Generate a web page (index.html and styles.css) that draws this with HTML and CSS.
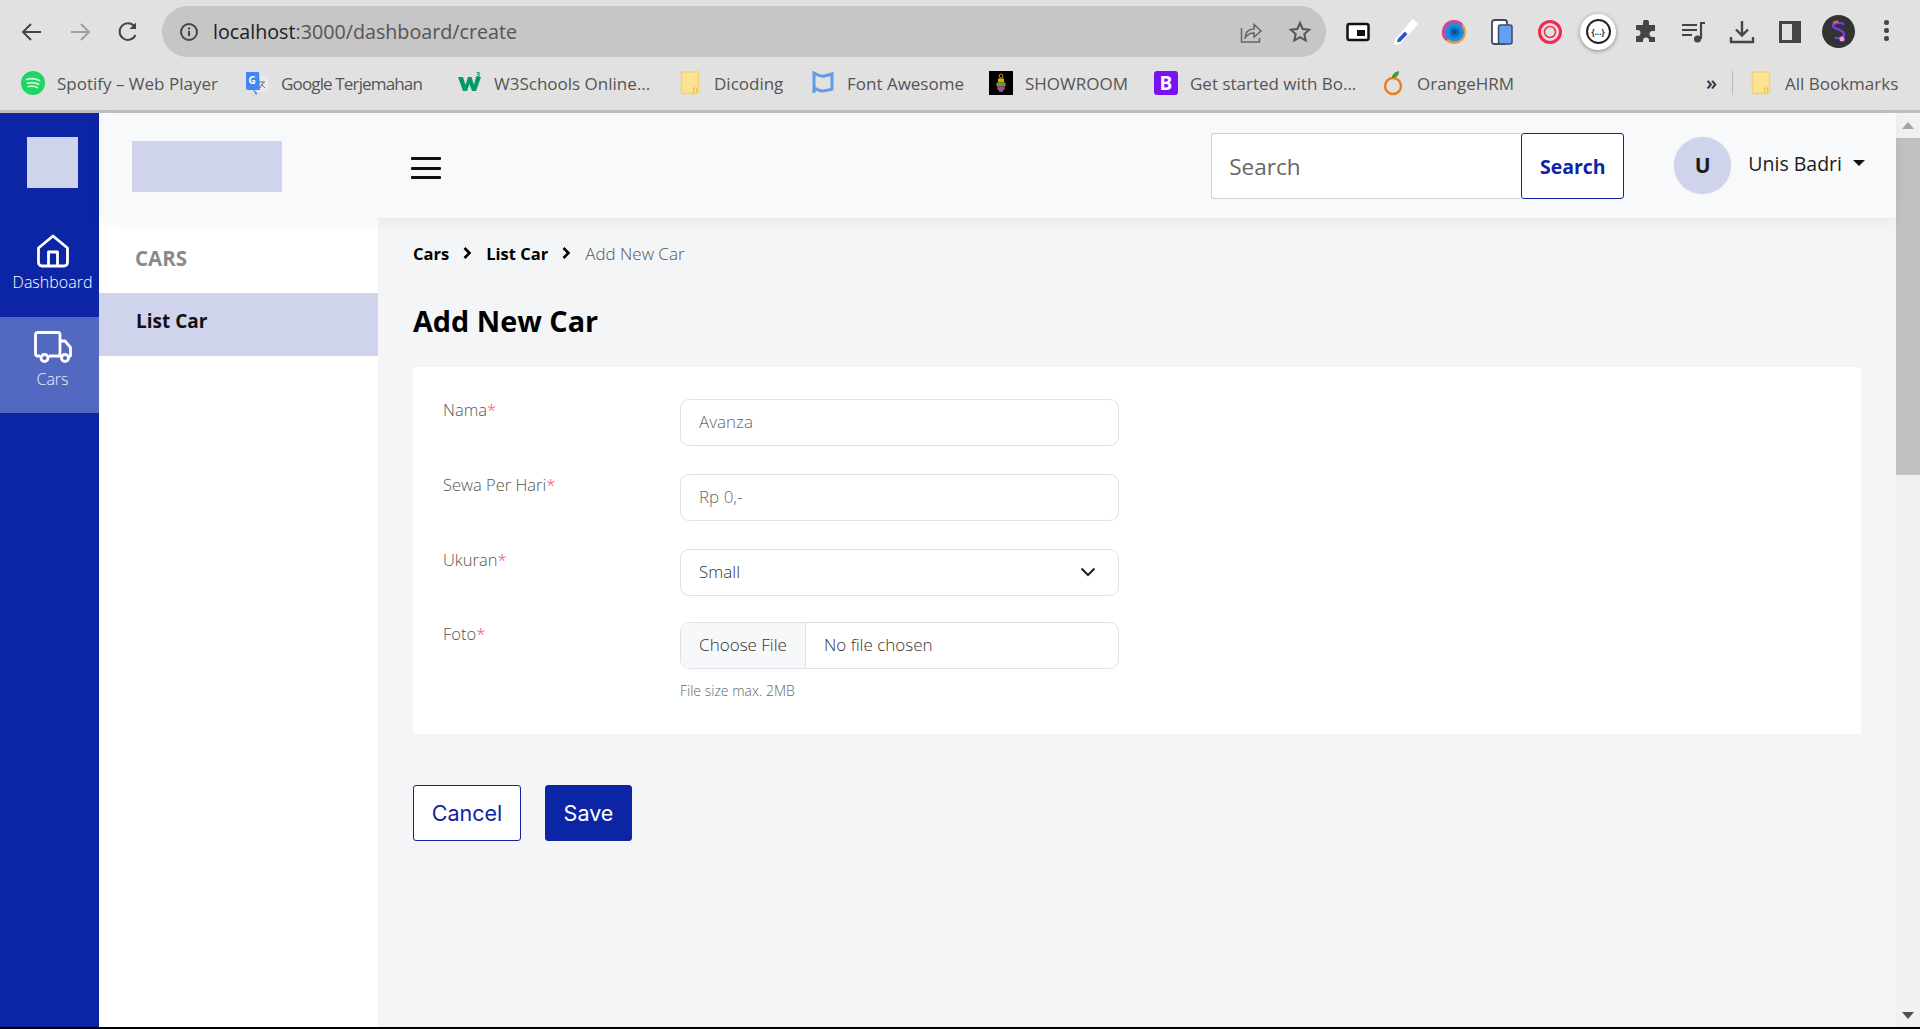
FILE: index.html
```html
<!DOCTYPE html>
<html lang="en">
<head>
<meta charset="utf-8">
<title>Add New Car</title>
<link rel="stylesheet" href="styles.css">
</head>
<body>
<div class="browser">
  <div class="toolbar">
    <div class="nav-buttons">
      <span class="tool"><svg width="24" height="24" viewBox="0 0 24 24" fill="none" stroke="#454545" stroke-width="2"><path d="M21 12H4M11 4l-8 8 8 8"/></svg></span>
      <span class="tool"><svg width="24" height="24" viewBox="0 0 24 24" fill="none" stroke="#a0a0a0" stroke-width="2"><path d="M3 12h17M13 4l8 8-8 8"/></svg></span>
      <span class="tool"><svg width="24" height="24" viewBox="0 0 24 24" fill="none" stroke="#454545" stroke-width="2"><path d="M19.5 15a8.3 8.3 0 1 1-1-8.5"/><path d="M20 2.5V9h-6.500z" fill="#454545" stroke="none"/></svg></span>
    </div>
    <div class="omnibox">
      <svg class="omni-info" width="20" height="20" viewBox="0 0 20 20" fill="none" stroke="#454545" stroke-width="2"><circle cx="10" cy="10" r="8"/><path d="M10 9v5M10 5.500v2"/></svg>
      <span class="url"><span class="url-host">localhost</span>:3000/dashboard/create</span>
      <svg class="omni-share" width="24" height="24" viewBox="0 0 24 24" fill="none" stroke="#666" stroke-width="1.500"><path d="M2.500 8v14h18v-4"/><path d="M6 19c0-7 4-10 9-10V4.500l7 6.500-7 6v-4c-4 0-7 1.500-9 5.500z"/></svg>
      <svg class="omni-star" width="24" height="24" viewBox="0 0 24 24" fill="none" stroke="#555" stroke-width="2"><path d="M12 3l2.700 6 6.500.7-4.900 4.300 1.400 6.500L12 17.200 6.300 20.500l1.400-6.500L2.800 9.700 9.300 9z"/></svg>
    </div>
    <div class="extensions">
      <span class="tool"><svg width="24" height="24" viewBox="0 0 24 24"><rect x="1.500" y="4" width="21" height="16" rx="2" fill="#fff" stroke="#111" stroke-width="2.500"/><rect x="11" y="10" width="8" height="6" fill="#111"/></svg></span>
      <span class="tool"><svg width="26" height="28" viewBox="0 0 26 28"><path d="M1 27l1-6L15 7l5 5L7 26z" fill="#fff"/><path d="M4 24.500l.8-3.500 7-7.500 2.700 2.700-7 7.300z" fill="#2f55c4"/><path d="M14 7l6-6 5 5-6 7z" fill="#fff"/></svg></span>
      <span class="tool"><svg width="26" height="26" viewBox="0 0 26 26"><circle cx="13" cy="13" r="12" fill="#f59a3c"/><path d="M13 1a12 12 0 0 0-8 21l17-17a12 12 0 0 0-9-4z" fill="#d8409e"/><circle cx="13.500" cy="13" r="9.500" fill="#1a8fe0"/><circle cx="13.500" cy="13" r="5.500" fill="#0f6fc0"/><circle cx="13.500" cy="13" r="2.500" fill="#0a4f90"/></svg></span>
      <span class="tool"><svg width="24" height="26" viewBox="0 0 24 26"><rect x="2" y="1" width="15" height="24" rx="2.500" fill="#fff" stroke="#3f4a5e" stroke-width="1.800"/><rect x="8.500" y="6" width="13.500" height="19" rx="2" fill="#669df6" stroke="#3f4a5e" stroke-width="1.500"/></svg></span>
      <span class="tool"><svg width="26" height="26" viewBox="0 0 26 26" fill="none" stroke="#f7264f"><circle cx="13" cy="13" r="10.500" stroke-width="3"/><circle cx="13" cy="13" r="5.500" stroke-width="1.500"/></svg></span>
      <span class="tool"><span class="json-badge"><span class="json-ring">{...}</span></span></span>
      <span class="tool"><svg width="24" height="24" viewBox="0 0 24 24" fill="#454545"><path d="M9 2.500a3 3 0 0 1 6 0V5h6v6h-2.500a3 3 0 0 0 0 6H21v5h-6v-1.500a3 3 0 0 0-6 0V22H2v-6h1.500a3 3 0 0 0 0-6H2V5h7z"/></svg></span>
      <span class="tool"><svg width="26" height="24" viewBox="0 0 26 24" fill="none" stroke="#454545" stroke-width="2"><path d="M1 5h15M1 10h15M1 15h10"/><path d="M20 19V3h4" stroke-width="2.200"/><circle cx="16.500" cy="19" r="3.500" fill="#454545" stroke="none"/></svg></span>
      <span class="tool"><svg width="26" height="26" viewBox="0 0 26 26" fill="none" stroke="#454545" stroke-width="2.400"><path d="M13 2v14M7 10.500l6 6 6-6"/><path d="M2 18v5h22v-5"/></svg></span>
      <span class="tool"><svg width="22" height="22" viewBox="0 0 22 22" fill="none"><rect x="1.500" y="1.500" width="19" height="19" stroke="#454545" stroke-width="3"/><rect x="13" y="1" width="8" height="20" fill="#454545"/></svg></span>
      <span class="profile"><svg width="33" height="33" viewBox="0 0 33 33"><circle cx="16.500" cy="16.500" r="16.500" fill="#333"/><path d="M22 9.500c-2-2-9-2.500-11 .5-1.500 3 8 4.500 10.500 7.500 2 3-1 7-9 5" fill="none" stroke="#7a3cf0" stroke-width="2.200"/><path d="M11 8l5-2" stroke="#e06a3a" stroke-width="2"/><circle cx="20" cy="24" r="2.500" fill="#f0a0d8"/></svg></span>
      <span class="kebab"><i></i><i></i><i></i></span>
    </div>
  </div>
  <div class="bookmarks">
    <span class="bm"><svg width="24" height="24" viewBox="0 0 24 24"><circle cx="12" cy="12" r="12" fill="#1ed760"/><path d="M5.500 8.500c4.500-1.300 9-1 13 1M6.500 12.200c4-1 7.500-.7 11 1.100M7.300 15.500c3.200-.8 6-.5 9 1" fill="none" stroke="#d5f7e0" stroke-width="1.800" stroke-linecap="round"/></svg><span>Spotify – Web Player</span></span>
    <span class="bm bm-tight"><svg width="24" height="24" viewBox="0 0 24 24"><rect x="10" y="5" width="13" height="16" fill="#e8eaed"/><path d="M14 11h6M17 10v1M15 17l4-6M16 13l4 4" stroke="#777" stroke-width="1" fill="none"/><path d="M1 1h13l1 18H9l3.500 3.500L11 24l-3-5H3a2 2 0 0 1-2-2z" fill="#4285f4"/><text class="g-mark" x="3.500" y="13">G</text></svg><span>Google Terjemahan</span></span>
    <span class="bm"><svg width="24" height="24" viewBox="0 0 24 24"><path d="M0 6h5l2.500 8L10 6h3.500l2.500 8 2-8h5l-5 14h-4l-2.500-7-2.500 7H5z" fill="#04996b"/><text class="w-mark" x="18" y="6">3</text></svg><span>W3Schools Online...</span></span>
    <span class="bm"><svg class="bm-folder" width="20" height="24" viewBox="0 0 20 24"><path d="M1.500 1h17v20a1.500 1.500 0 0 1-1.500 1.500H3A1.500 1.500 0 0 1 1.500 21z" fill="#fde293" stroke="#f4d26e" stroke-width="1.500"/><path d="M13.500 22v-5h3v5" fill="none" stroke="#e9bd4f"/></svg><span>Dicoding</span></span>
    <span class="bm"><svg width="24" height="24" viewBox="0 0 24 24" fill="none" stroke="#5f9be6" stroke-width="3"><path d="M3 22V2c4 2 6 4 10 3 3-.8 5-1 8-2v15c-4 1-6 2-9 2-3 .2-6-2-9-3"/></svg><span>Font Awesome</span></span>
    <span class="bm"><svg width="24" height="24" viewBox="0 0 24 24"><rect width="24" height="24" fill="#000"/><circle cx="12" cy="5" r="2" fill="none" stroke="#e08a10"/><rect x="9" y="7.500" width="6" height="4" fill="#e0a010"/><rect x="7.500" y="11.500" width="9" height="4" fill="#5aa040"/><rect x="8.500" y="15.500" width="7" height="3.500" fill="#c04090"/><rect x="10" y="19" width="4" height="2" fill="#7050b0"/></svg><span>SHOWROOM</span></span>
    <span class="bm"><span class="bs-icon">B</span><span>Get started with Bo...</span></span>
    <span class="bm"><svg width="24" height="28" viewBox="0 0 24 28"><circle cx="12" cy="17" r="8" fill="none" stroke="#ea7f22" stroke-width="2.500"/><path d="M11 9c0-4 3-6 7-7 0 4-2 7-7 7z" fill="#3d9a41"/></svg><span>OrangeHRM</span></span>
    <span class="bm-more">»</span>
    <span class="bm-sep"></span>
    <span class="bm bm-all"><svg class="bm-folder" width="20" height="24" viewBox="0 0 20 24"><path d="M1.500 1h17v20a1.500 1.500 0 0 1-1.500 1.500H3A1.500 1.500 0 0 1 1.500 21z" fill="#fde293" stroke="#f4d26e" stroke-width="1.500"/><path d="M13.500 22v-5h3v5" fill="none" stroke="#e9bd4f"/></svg><span>All Bookmarks</span></span>
  </div>
</div>

<div class="app">
  <nav class="rail">
    <div class="rail-logo"></div>
    <a class="rail-item rail-dash">
      <svg width="34" height="34" viewBox="0 0 34 34" fill="none" stroke="#fff" stroke-width="2.800" stroke-linejoin="round"><path d="M2.500 14L17 2l14.500 12v14.500a3.500 3.500 0 0 1-3.500 3.500H6a3.500 3.500 0 0 1-3.500-3.500z"/><path d="M12.500 32V18h9v14"/></svg>
      <span>Dashboard</span>
    </a>
    <a class="rail-item rail-cars">
      <svg width="38" height="32" viewBox="0 0 38 32" fill="none" stroke="#fff" stroke-width="2.800" stroke-linejoin="round"><path d="M6 25H3.500a2 2 0 0 1-2-2V3.500a2 2 0 0 1 2-2H24a2 2 0 0 1 2 2V25H15"/><path d="M26 10h5l5.500 6.500V25H35M26 25h1"/><circle cx="10.500" cy="27" r="3.500"/><circle cx="31" cy="27" r="3.500"/></svg>
      <span>Cars</span>
    </a>
  </nav>

  <div class="workspace">
    <header class="topbar">
      <div class="brand-logo"></div>
      <button class="hamburger" type="button"><i></i><i></i><i></i></button>
      <form class="search">
        <input class="search-input" type="text" placeholder="Search">
        <button class="search-btn" type="button">Search</button>
      </form>
      <div class="user">
        <span class="avatar">U</span>
        <span class="user-name">Unis Badri</span>
        <span class="caret"></span>
      </div>
    </header>

    <div class="body-row">
      <aside class="subnav">
        <div class="subnav-title">CARS</div>
        <a class="subnav-item">List Car</a>
      </aside>

      <main class="content">
        <div class="crumbs">
          <a>Cars</a>
          <svg width="9" height="12" viewBox="0 0 9 12" fill="none" stroke="#000" stroke-width="2.600"><path d="M1.500 1l5 5-5 5"/></svg>
          <a>List Car</a>
          <svg width="9" height="12" viewBox="0 0 9 12" fill="none" stroke="#000" stroke-width="2.600"><path d="M1.500 1l5 5-5 5"/></svg>
          <span>Add New Car</span>
        </div>
        <h1 class="page-title">Add New Car</h1>

        <section class="card">
          <div class="field">
            <label class="field-label">Nama<em>*</em></label>
            <input class="control" type="text" placeholder="Avanza">
          </div>
          <div class="field">
            <label class="field-label">Sewa Per Hari<em>*</em></label>
            <input class="control" type="text" placeholder="Rp 0,-">
          </div>
          <div class="field field-select">
            <label class="field-label">Ukuran<em>*</em></label>
            <div class="control control-select">
              <span>Small</span>
              <svg width="16" height="10" viewBox="0 0 16 10" fill="none" stroke="#222" stroke-width="2"><path d="M1.500 1.500L8 8l6.500-6.500"/></svg>
            </div>
          </div>
          <div class="field field-file">
            <label class="field-label">Foto<em>*</em></label>
            <div class="file-col">
              <div class="control control-file">
                <span class="file-btn">Choose File</span>
                <span class="file-name">No file chosen</span>
              </div>
              <small class="hint">File size max. 2MB</small>
            </div>
          </div>
        </section>

        <div class="actions">
          <button class="btn btn-outline" type="button">Cancel</button>
          <button class="btn btn-solid" type="button">Save</button>
        </div>
      </main>
    </div>
  </div>

  <div class="scrollbar">
    <span class="arrow-up"></span>
    <span class="thumb"></span>
    <span class="arrow-down"></span>
  </div>
</div>
<div class="taskbar-edge"></div>
</body>
</html>
```
FILE: styles.css
```css
* { box-sizing: border-box; }
html, body { height: 100%; }
body {
  margin: 0;
  height: 1029px;
  overflow: hidden;
  display: flex;
  flex-direction: column;
  font-family: "Open Sans", "Noto Sans", sans-serif;
  color: #111;
  background: #f4f5f7;
}
a { color: inherit; text-decoration: none; }
i { display: block; }

/* browser chrome */
.browser {
  height: 113px;
  flex: none;
  background: #e1e1e1;
  border-bottom: 3px solid #bfbfbf;
}
.toolbar {
  height: 63px;
  display: flex;
  align-items: center;
  padding-left: 8px;
}
.nav-buttons, .extensions { display: flex; align-items: center; }
.tool {
  width: 48px;
  height: 40px;
  display: flex;
  align-items: center;
  justify-content: center;
}
.omnibox {
  width: 1164px;
  height: 51px;
  margin-left: 10px;
  display: flex;
  align-items: center;
  padding: 0 14px 0 17px;
  border-radius: 26px;
  background: #c6c6c6;
}
.url {
  margin-left: 14px;
  font-size: 19.700px;
  color: #555;
  flex: 1;
}
.url-host { color: #1c1c1c; }
.omni-star { margin-left: 25px; }
.extensions { margin-left: 8px; }
.json-badge {
  width: 36px;
  height: 36px;
  border-radius: 50%;
  background: #fff;
  box-shadow: 0 1px 4px rgba(0,0,0,.4);
  display: flex;
  align-items: center;
  justify-content: center;
}
.json-ring {
  width: 25px;
  height: 25px;
  border-radius: 50%;
  border: 2px solid #222;
  font-size: 8px;
  font-weight: 700;
  line-height: 21px;
  text-align: center;
  color: #222;
}
.profile { margin-left: 8px; display: flex; margin-right: 29px; }
.kebab { display: flex; flex-direction: column; gap: 3.500px; margin-top: -2px; }
.kebab i { width: 4.500px; height: 4.500px; border-radius: 50%; background: #454545; }

.bookmarks {
  height: 47px;
  padding: 0 0 7px 21px;
  display: grid;
  grid-template-columns: 224px 213px 222px 131px 178px 165px 227px 325px 26px 19px 1fr;
  align-items: center;
  font-size: 17px;
  color: #555;
}
.bm { display: flex; align-items: center; gap: 12px; white-space: nowrap; }
.bm-tight { letter-spacing: -.85px; }
.bm-folder { margin-right: 2px; }
.bm-more { font-size: 20px; line-height: 20px; color: #333; font-weight: 600; text-align: left; }
.bm-sep { width: 1px; height: 24px; background: #bbb; }
.g-mark { font: 700 10px "Open Sans", sans-serif; fill: #fff; }
.w-mark { font: 700 7px "Open Sans", sans-serif; fill: #04996b; }
.bs-icon {
  width: 24px;
  height: 24px;
  border-radius: 3px;
  background: #7a11f2;
  color: #fff;
  font-size: 19px;
  font-weight: 700;
  line-height: 24px;
  text-align: center;
}

/* app frame */
.app { flex: 1; min-height: 0; display: flex; }
.taskbar-edge { height: 2px; flex: none; background: #000; }

.rail {
  width: 99px;
  flex: none;
  display: flex;
  flex-direction: column;
  background: #0c25a5;
  color: #fff;
}
.rail-logo {
  width: 51px;
  height: 51px;
  margin: 24px 0 0 27px;
  background: #cfd4ec;
}
.rail-item {
  height: 96px;
  padding-left: 6px;
  display: flex;
  flex-direction: column;
  align-items: center;
  font-size: 16px;
  font-weight: 300;
  line-height: 22px;
}
.rail-dash { margin-top: 33px; height: 96px; padding-top: 13px; }
.rail-dash svg { margin-bottom: 3px; }
.rail-cars { padding-top: 14px; background: #5368c0; color: #eef0fa; }
.rail-cars svg { margin-bottom: 5px; }

.workspace { flex: 1; min-width: 0; display: flex; flex-direction: column; }
.topbar {
  height: 105px;
  flex: none;
  position: relative;
  z-index: 1;
  display: flex;
  align-items: center;
  padding: 0 31px 0 33px;
  background: #f8f9fb;
  box-shadow: 0 4px 14px rgba(0,0,0,.05);
}
.brand-logo { width: 150px; height: 51px; margin-top: 2px; background: #cfd4ec; }
.hamburger {
  width: 30px;
  height: 22px;
  margin-left: 129px;
  margin-top: 5px;
  padding: 0;
  border: 0;
  background: none;
  display: flex;
  flex-direction: column;
  justify-content: space-between;
}
.hamburger i { height: 3px; width: 100%; border-radius: 1px; background: #111; }
.search { margin-left: auto; display: flex; height: 66px; margin-top: 1px; }
.search-input {
  width: 310px;
  height: 66px;
  border: 1px solid #cfcfcf;
  border-right: 0;
  border-radius: 3px 0 0 3px;
  padding: 0 17px;
  font: 400 22.500px "Open Sans", sans-serif;
  background: #fff;
  color: #555;
}
.search-input::placeholder { color: #666; opacity: 1; }
.search-btn {
  width: 103px;
  height: 66px;
  border: 1px solid #0c25a5;
  border-radius: 3px;
  background: #fff;
  color: #0c25a5;
  font: 700 19.500px "Open Sans", sans-serif;
  padding: 0;
}
.user { display: flex; align-items: center; margin-left: 50px; }
.avatar {
  width: 57px;
  height: 57px;
  border-radius: 50%;
  background: #cfd4ec;
  box-shadow: 0 0 2px rgba(0,0,0,.1);
  font-size: 21px;
  font-weight: 700;
  line-height: 57px;
  text-align: center;
  color: #1b1b1b;
}
.user-name { margin-left: 17px; margin-top: -4px; font-size: 19.500px; color: #1b1b1b; }
.caret {
  margin-left: 11px;
  margin-top: -5px;
  border-left: 6px solid transparent;
  border-right: 6px solid transparent;
  border-top: 6px solid #111;
}

.body-row { flex: 1; min-height: 0; display: flex; }
.subnav { width: 279px; flex: none; background: #fff; }
.subnav-title {
  height: 75px;
  padding: 27px 0 0 36px;
  font-size: 20.500px;
  line-height: 26px;
  font-weight: 700;
  color: #8a8a8a;
}
.subnav-item {
  display: block;
  height: 63px;
  padding-left: 37px;
  background: #cfd4ec;
  font-size: 19px;
  font-weight: 700;
  line-height: 57px;
  color: #111;
}

.content { flex: 1; min-width: 0; padding: 23px 35px 0; background: #f4f5f7; }
.crumbs {
  display: flex;
  align-items: center;
  gap: 14px;
  height: 24px;
  font-size: 16.500px;
  font-weight: 700;
  color: #000;
}
.crumbs span { font-size: 17px; font-weight: 300; color: #555; }
.page-title {
  margin: 39px 0 0;
  font-size: 28.800px;
  line-height: 34px;
  font-weight: 700;
  color: #000;
}
.card {
  margin-top: 29px;
  height: 367px;
  padding: 32px 30px 0;
  border-radius: 3px;
  background: #fff;
}
.field { display: flex; align-items: flex-start; margin-bottom: 28px; }
.field-select { margin-bottom: 26px; }
.field-label {
  width: 237px;
  flex: none;
  margin-top: -1px;
  font-size: 16.500px;
  font-weight: 300;
  line-height: 24px;
  color: #555;
}
.field-file .field-label { margin-top: 0; }
.field-label em { font-style: normal; color: #f2446a; }
.control {
  width: 439px;
  height: 47px;
  border: 1px solid #dfe1e8;
  border-radius: 9px;
  padding: 0 18px 2px;
  background: #fff;
  font: 300 17px "Open Sans", sans-serif;
  color: #333;
}
.control::placeholder { color: #666; opacity: 1; }
.control-select { display: flex; align-items: center; justify-content: space-between; padding-right: 22px; }
.control-file { display: flex; align-items: stretch; padding: 0; overflow: hidden; }
.file-btn {
  width: 125px;
  padding-bottom: 2px;
  display: flex;
  align-items: center;
  justify-content: center;
  background: #f7f8f9;
  border-right: 1px solid #dfe1e8;
}
.file-name { display: flex; align-items: center; padding: 0 0 2px 18px; }
.hint { display: block; margin-top: 13px; font-size: 14px; line-height: 18px; font-weight: 300; color: #666; }

.actions { display: flex; gap: 24px; margin-top: 51px; }
.btn {
  height: 56px;
  border-radius: 3px;
  font: 400 21.500px "Inter", sans-serif;
  padding: 0;
}
.btn-outline { width: 108px; border: 1px solid #0c25a5; background: #fff; color: #0c25a5; }
.btn-solid { width: 87px; border: 1px solid #0c25a5; background: #0c25a5; color: #fff; }

.scrollbar {
  width: 24px;
  flex: none;
  display: flex;
  flex-direction: column;
  align-items: center;
  background: #f1f1f1;
}
.thumb { width: 100%; height: 337px; margin-top: 9px; background: #c1c1c1; }
.arrow-up {
  margin-top: 9px;
  border-left: 6px solid transparent;
  border-right: 6px solid transparent;
  border-bottom: 7px solid #a3a3a3;
}
.arrow-down {
  margin-top: auto;
  margin-bottom: 8px;
  border-left: 6px solid transparent;
  border-right: 6px solid transparent;
  border-top: 7px solid #505050;
}
```
